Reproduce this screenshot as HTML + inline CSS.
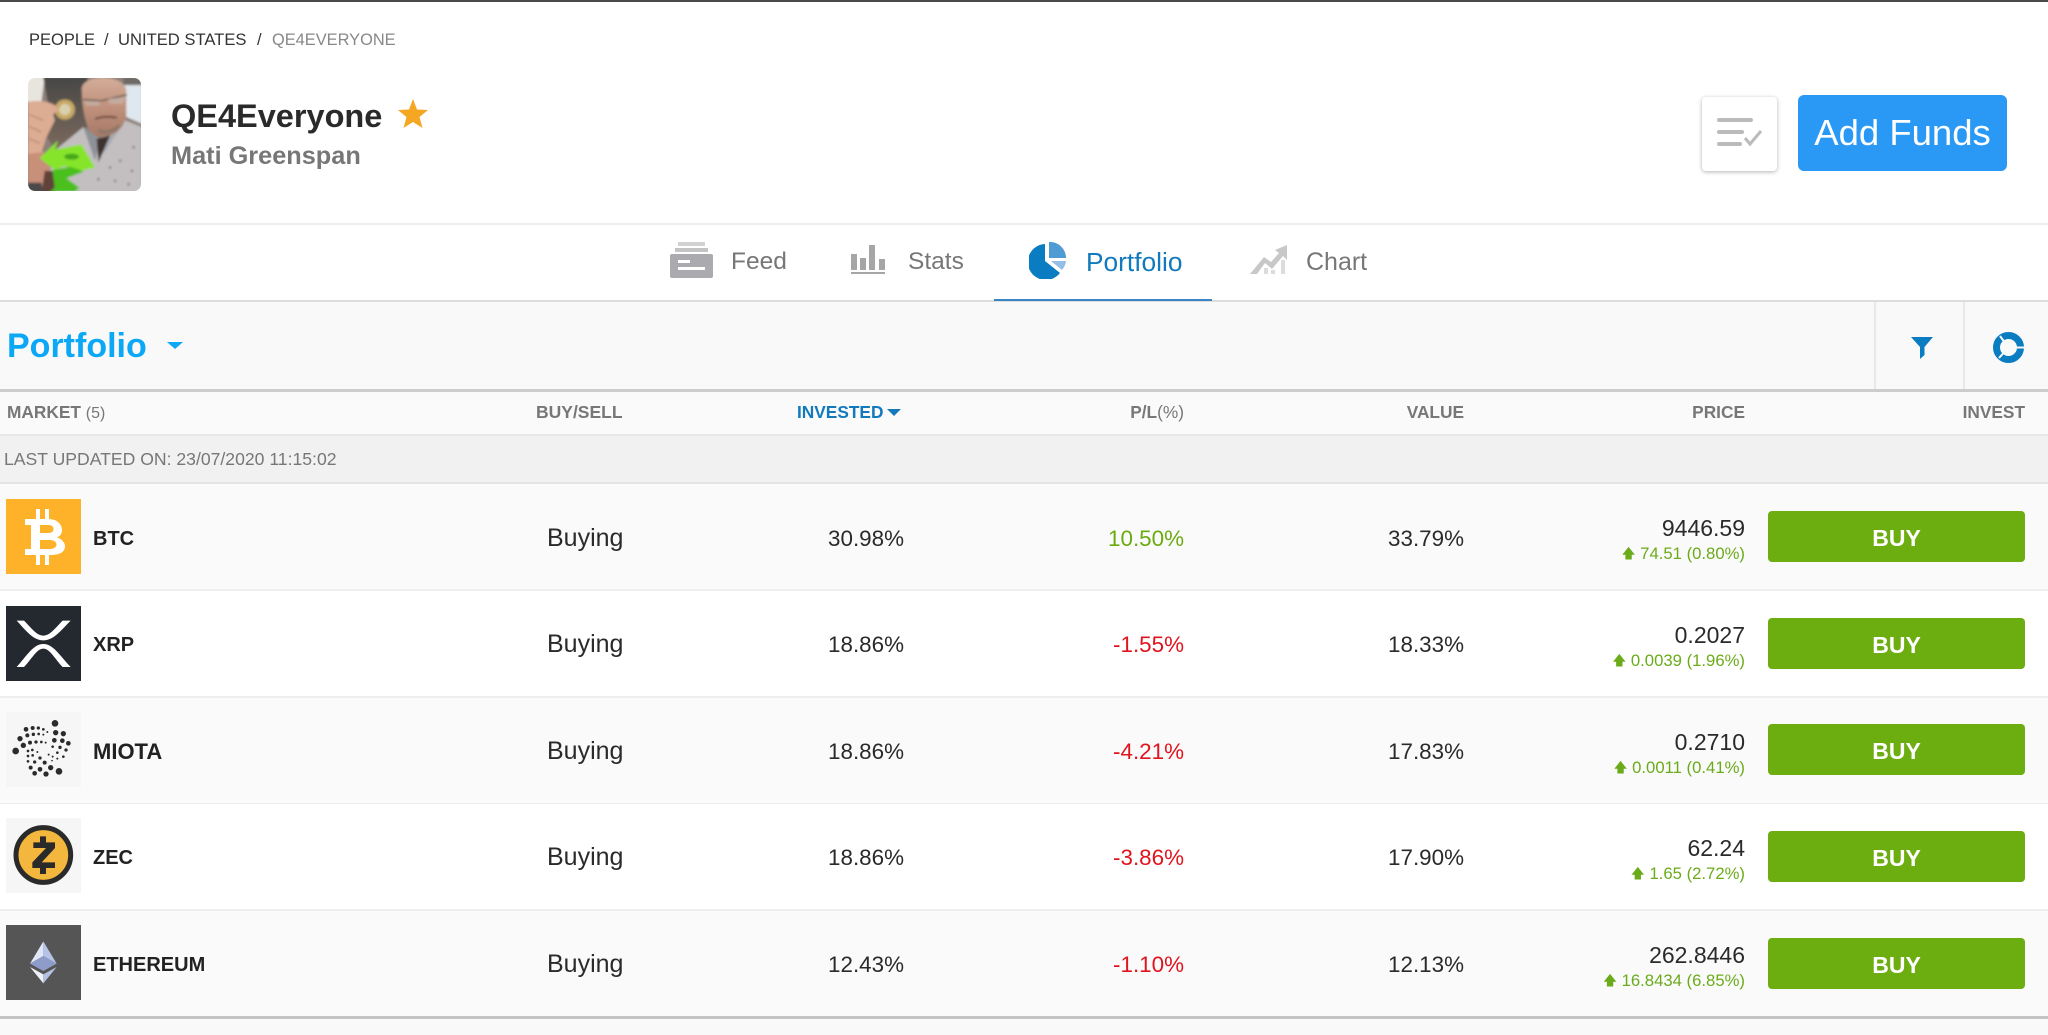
<!DOCTYPE html>
<html><head><meta charset="utf-8"><title>QE4Everyone</title>
<style>
*{box-sizing:border-box;margin:0;padding:0}
html,body{width:2048px;height:1035px;overflow:hidden;background:#fff;font-family:"Liberation Sans",sans-serif;color:#222}
.a{position:absolute}
.t{position:absolute;white-space:nowrap;line-height:30px;height:30px}
.r{text-align:right}
.row{position:absolute;left:0;width:2048px;height:107px;border-bottom:2px solid #eeeeee}
.odd{background:#fafafa}
.ev{background:#fff}
.ic{position:absolute;left:6px;width:75px;height:75px;display:block}
.nm{font-weight:700;font-size:20px;left:93px}
.by{font-size:25px;left:547px;color:#2a2a2a}
.n{font-size:22.4px;color:#2a2a2a}
.p{font-size:23px;color:#2a2a2a;right:303px;text-align:right}
.c{font-size:16.7px;color:#6bab1a;right:303px;text-align:right}
.c span{font-size:13.500px;position:relative;top:-1px}
.g{color:#6bab10}.d{color:#e0141e}
.buy{position:absolute;left:1768px;width:257px;height:51px;background:#6cad10;border-radius:4px;color:#fff;font-weight:700;font-size:23px;line-height:53px;text-align:center}
.h{font-weight:700;font-size:17.300px;color:#777}
.tab{font-size:25px;color:#777}
</style></head><body>
<div class="a" style="left:0;top:0;width:2048px;height:2px;background:#4a4a4a"></div>

<div class="t" style="left:29px;top:25px;font-size:16.500px;color:#333">PEOPLE</div>
<div class="t" style="left:104px;top:25px;font-size:16.500px;color:#333">/</div>
<div class="t" style="left:118px;top:25px;font-size:16.600px;color:#333">UNITED STATES</div>
<div class="t" style="left:257px;top:25px;font-size:16.500px;color:#333">/</div>
<div class="t" style="left:272px;top:25px;font-size:16.400px;color:#888">QE4EVERYONE</div>

<svg class="a" style="left:28px;top:78px;border-radius:7px" width="113" height="113" viewBox="85 24 337 336" preserveAspectRatio="none">
<defs>
<filter id="bl" x="-5%" y="-5%" width="110%" height="110%"><feGaussianBlur stdDeviation="3.500"/></filter>
<linearGradient id="wall" x1="0" y1="0" x2="0" y2="1"><stop offset="0" stop-color="#474745"/><stop offset="1" stop-color="#7b6a5e"/></linearGradient>
<linearGradient id="skin" x1="0" y1="0" x2="0" y2="1"><stop offset="0" stop-color="#d3ad99"/><stop offset=".5" stop-color="#c0917c"/><stop offset="1" stop-color="#a57a66"/></linearGradient>
</defs>
<g filter="url(#bl)">
<rect x="80" y="20" width="350" height="350" fill="#8d7f78"/>
<path d="M80 20H135L125 95H80Z" fill="#e8e5df"/>
<path d="M130 20H262V170L165 235L135 190L150 130Z" fill="url(#wall)"/>
<path d="M370 20H425V45H370Z" fill="#6f6b66"/>
<path d="M372 45H425V160L378 140Z" fill="#dfe8ef"/>
<circle cx="195" cy="118" r="30" fill="#c7a865"/><circle cx="195" cy="118" r="17" fill="#d9d1ad"/>
<path d="M135 365L165 240L250 170L300 205L375 150L425 170V365Z" fill="#c3bfc0"/>
<path d="M250 170L285 270L300 205Z" fill="#8d9298"/>
<path d="M375 150L300 205L310 250Z" fill="#a7acb2"/>
<path d="M290 205L330 195L295 275Z" fill="#3c332f"/>
<g fill="#8a7d7c"><circle cx="330" cy="290" r="4"/><circle cx="360" cy="270" r="4"/><circle cx="395" cy="300" r="4"/><circle cx="345" cy="330" r="4"/><circle cx="295" cy="325" r="4"/><circle cx="385" cy="340" r="4"/><circle cx="400" cy="230" r="4"/></g>
<path d="M85 250L130 240L150 290L155 340L130 365H85Z" fill="#c88f79"/>
<path d="M135 300L165 300L170 365H125Z" fill="#5f4238"/>
<path d="M85 335H125L130 365H85Z" fill="#4c4a48"/>
<path d="M85 95C120 88 165 95 177 118L160 132L165 150L140 200L125 245L85 250Z" fill="#dcac93"/>
<path d="M88 132L130 150M88 168L125 185M88 205L120 218" stroke="#b47f69" stroke-width="3" fill="none"/>
<path d="M245 55C250 12 370 12 378 60V135C370 190 315 205 288 197C262 185 252 140 247 95Z" fill="url(#skin)"/>
<path d="M250 88L302 92L380 74" stroke="#4f4a48" stroke-width="4" fill="none"/>
<path d="M254 92L258 106H296L302 94ZM324 86L328 101H366L376 80Z" fill="#c4ab9e"/>
<path d="M285 146C305 138 330 138 350 142" stroke="#6e4438" stroke-width="6" fill="none"/>
<path d="M295 180C315 190 340 182 358 165" stroke="#8e776a" stroke-width="10" fill="none"/>
<path d="M120 262L175 210L165 237L225 225L245 222L285 290L230 303L195 286L165 298Z" fill="#86e52a"/>
<path d="M158 298L212 288L252 302L200 322L238 350L225 362H150L165 350Z" fill="#4cc01e"/>
<ellipse cx="215" cy="258" rx="22" ry="9" fill="#46a71e"/>
</g></svg>

<div class="t" style="left:171px;top:96px;height:40px;line-height:40px;font-size:32.500px;font-weight:700;color:#2a2a2a">QE4Everyone</div>
<svg class="a" style="left:398px;top:99px" width="30" height="29" viewBox="0 0 30 29"><path d="M15 0L19 10.500L30 11L21.500 18L24.500 29L15 23L5.500 29L8.500 18L0 11L11 10.500Z" fill="#f5a623"/></svg>
<div class="t" style="left:171px;top:141px;font-size:25.300px;font-weight:700;color:#777">Mati Greenspan</div>

<div class="a" style="left:1702px;top:97px;width:75px;height:74px;background:#fff;border-radius:4px;box-shadow:0 1px 4px rgba(0,0,0,.3)"></div>
<svg class="a" style="left:1717px;top:117px" width="46" height="34" viewBox="0 0 46 34"><path d="M2 3H34M2 15H25M2 27H23" stroke="#bbb" stroke-width="4" stroke-linecap="round" fill="none"/><path d="M28 21L33 27L44 14" stroke="#bbb" stroke-width="3" fill="none"/></svg>
<div class="a" style="left:1798px;top:95px;width:209px;height:76px;background:#2a99f6;border-radius:6px;color:#fff;font-size:36.500px;line-height:76px;text-align:center">Add Funds</div>

<div class="a" style="left:0;top:223px;width:2048px;height:2px;background:#eeeeee"></div>

<svg class="a" style="left:670px;top:241px" width="43" height="37" viewBox="0 0 43 37"><rect x="8" y="1" width="27" height="4" fill="#d2d2d2"/><rect x="5" y="7" width="33" height="4" fill="#c4c4c4"/><rect x="0" y="13" width="43" height="24" rx="2" fill="#aaaaaf"/><rect x="8" y="19" width="12" height="3" fill="#fff"/><rect x="8" y="26" width="27" height="3" fill="#fff"/></svg>
<div class="t tab" style="left:731px;top:247px;font-size:24.500px">Feed</div>
<svg class="a" style="left:851px;top:245px" width="34" height="29" viewBox="0 0 34 29"><g fill="#a6a6a6"><rect x="0" y="9" width="6" height="16"/><rect x="9" y="13" width="6" height="12"/><rect x="18" y="0" width="6" height="25"/><rect x="28" y="14" width="6" height="11"/><rect x="0" y="27" width="34" height="2"/></g></svg>
<div class="t tab" style="left:908px;top:247px;font-size:24.500px">Stats</div>
<svg class="a" style="left:1029px;top:242px" width="38" height="37" viewBox="0 0 38 37"><path d="M16 2A18 18 0 1 0 31 31L16 19Z" fill="#0a7cc1"/><path d="M20 0A16 16 0 0 1 37 16H20Z" fill="#4f9bd3"/><path d="M22 19H37A17 17 0 0 1 33 28Z" fill="#93bee6"/></svg>
<div class="t tab" style="left:1086px;top:247px;color:#1279bd;font-size:26.300px">Portfolio</div>
<svg class="a" style="left:1250px;top:245px" width="37" height="29" viewBox="0 0 37 29"><path d="M0 29L14 12L21 17L29 8L25 5L37 0V15L33 11L22 24L15 18L7 29Z" fill="#c8c8c8"/><rect x="14" y="23" width="4" height="6" fill="#dcdcdc"/><rect x="21" y="25" width="4" height="4" fill="#dcdcdc"/><rect x="31" y="15" width="4" height="14" fill="#dcdcdc"/></svg>
<div class="t tab" style="left:1306px;top:247px">Chart</div>

<div class="a" style="left:0;top:300px;width:2048px;height:2px;background:#dddddd"></div>
<div class="a" style="left:994px;top:299px;width:218px;height:2px;background:#3a86c4"></div>

<div class="a" style="left:0;top:302px;width:2048px;height:87px;background:#f9f9f9"></div>
<div class="t" style="left:7px;top:326px;height:40px;line-height:40px;font-size:34px;font-weight:700;color:#0ba8f6">Portfolio</div>
<div class="a" style="left:167px;top:342px;width:0;height:0;border-left:8px solid transparent;border-right:8px solid transparent;border-top:7px solid #0ba8f6"></div>
<div class="a" style="left:1874px;top:302px;width:2px;height:87px;background:#e8e8e8"></div>
<div class="a" style="left:1963px;top:302px;width:2px;height:87px;background:#e8e8e8"></div>
<svg class="a" style="left:1911px;top:337px" width="22" height="22" viewBox="0 0 22 22"><path d="M0 0H22L13.500 10V18L9 22V10Z" fill="#0a7cc1"/></svg>
<svg class="a" style="left:1992px;top:331px" width="33" height="33" viewBox="0 0 33 33"><circle cx="16.500" cy="16.500" r="12" fill="none" stroke="#0a7cc1" stroke-width="7"/><path d="M24 16.500H33M8 5L12 10.500M7 27L11.500 22" stroke="#f9f9f9" stroke-width="2"/></svg>

<div class="a" style="left:0;top:389px;width:2048px;height:3px;background:#cdcdcd"></div>
<div class="a" style="left:0;top:392px;width:2048px;height:42px;background:#fafafa"></div>
<div class="a" style="left:0;top:434px;width:2048px;height:2px;background:#e8e8e8"></div>
<div class="t h" style="left:7px;top:397px">MARKET <span style="font-weight:400;font-size:16px">(5)</span></div>
<div class="t h" style="left:536px;top:397px;font-size:17.500px">BUY/SELL</div>
<div class="t h" style="left:797px;top:397px;color:#1279bd">INVESTED</div>
<div class="a" style="left:887px;top:409px;width:0;height:0;border-left:7px solid transparent;border-right:7px solid transparent;border-top:7px solid #1279bd"></div>
<div class="t h r" style="right:864px;top:397px">P/L<span style="font-weight:400">(%)</span></div>
<div class="t h r" style="right:584px;top:397px">VALUE</div>
<div class="t h r" style="right:303px;top:397px">PRICE</div>
<div class="t h r" style="right:23px;top:397px">INVEST</div>

<div class="a" style="left:0;top:436px;width:2048px;height:48px;background:#f1f1f1;border-bottom:2px solid #e4e4e4"></div>
<div class="t" style="left:4px;top:444px;font-size:17.600px;color:#777">LAST UPDATED ON: 23/07/2020 11:15:02</div>

<!-- BTC -->
<div class="row odd" style="top:484px;height:107px"></div>
<svg class="ic" style="top:499px" viewBox="0 0 75 75"><rect width="75" height="75" fill="#fdb22a"/><path fill="#fff" fill-rule="evenodd" d="M19 20H42C52 20 56 26 56 31C56 35 54 37 51 38.500C56 40 59 44 59 47C59 53 54 56 44 56H19V50H25V26H19ZM34 26V34H42C46 34 47.500 32.500 47.500 30C47.500 27.500 46 26 42 26ZM34 41V50H44C48 50 50.500 48 50.500 45.500C50.500 43 48 41 44 41Z"/><path fill="#fff" d="M30 10h4v10h-4zM39 10h4v10h-4zM30 56h4v10h-4zM39 56h4v10h-4z"/></svg>
<div class="t nm" style="top:524px">BTC</div>
<div class="t by" style="top:523px">Buying</div>
<div class="t n r" style="right:1144px;top:524px">30.98%</div>
<div class="t n r g" style="right:864px;top:524px">10.50%</div>
<div class="t n r" style="right:584px;top:524px">33.79%</div>
<div class="t p" style="top:513px">9446.59</div>
<div class="t c" style="top:539px"><span>&#129093;</span> 74.51 (0.80%)</div>
<div class="buy" style="top:511px;line-height:54px">BUY</div>

<!-- XRP -->
<div class="row ev" style="top:591px"></div>
<svg class="ic" style="top:606px" viewBox="18 48 225 225"><rect x="18" y="48" width="225" height="225" fill="#23292f"/><path fill="#fff" d="M50 92H72C95 115 110 137 130 137C150 137 165 115 188 92H212C180 125 160 151 130 151C100 151 80 125 50 92Z"/><path fill="#fff" d="M50 231H72C95 208 110 176 130 176C150 176 165 208 188 231H212C180 198 160 162 130 162C100 162 80 198 50 231Z"/></svg>
<div class="t nm" style="top:630px">XRP</div>
<div class="t by" style="top:629px">Buying</div>
<div class="t n r" style="right:1144px;top:630px">18.86%</div>
<div class="t n r d" style="right:864px;top:630px">-1.55%</div>
<div class="t n r" style="right:584px;top:630px">18.33%</div>
<div class="t p" style="top:620px">0.2027</div>
<div class="t c" style="top:646px"><span>&#129093;</span> 0.0039 (1.96%)</div>
<div class="buy" style="top:618px;line-height:54px">BUY</div>

<!-- MIOTA -->
<div class="row odd" style="top:698px"></div>
<svg class="ic" style="top:712px" viewBox="18 38 225 225"><rect x="18" y="38" width="225" height="225" fill="#f6f6f6"/><g fill="#2b2b2b"><circle cx="165" cy="72" r="10"/><circle cx="47" cy="155" r="10"/><circle cx="177" cy="216" r="10"/><circle cx="167" cy="100" r="8"/><circle cx="190" cy="103" r="8"/><circle cx="60" cy="118" r="8"/><circle cx="70" cy="138" r="8"/><circle cx="205" cy="132" r="7"/><circle cx="187" cy="124" r="7"/><circle cx="163" cy="123" r="7"/><circle cx="138" cy="224" r="8"/><circle cx="152" cy="205" r="8"/><circle cx="120" cy="210" r="7"/><circle cx="104" cy="222" r="7"/><circle cx="92" cy="205" r="6"/><circle cx="78" cy="90" r="7"/><circle cx="98" cy="86" r="6"/><circle cx="115" cy="86" r="5"/><circle cx="130" cy="90" r="4"/><circle cx="142" cy="98" r="3"/><circle cx="82" cy="108" r="6"/><circle cx="100" cy="105" r="5"/><circle cx="116" cy="104" r="4"/><circle cx="130" cy="106" r="3"/><circle cx="90" cy="130" r="6"/><circle cx="108" cy="128" r="5"/><circle cx="124" cy="128" r="4"/><circle cx="137" cy="130" r="3"/><circle cx="84" cy="155" r="4"/><circle cx="97" cy="152" r="4"/><circle cx="112" cy="158" r="3"/><circle cx="84" cy="170" r="4"/><circle cx="98" cy="168" r="4"/><circle cx="120" cy="176" r="5"/><circle cx="84" cy="186" r="4"/><circle cx="104" cy="188" r="5"/><circle cx="134" cy="190" r="6"/><circle cx="180" cy="144" r="5"/><circle cx="198" cy="152" r="5"/><circle cx="158" cy="142" r="4"/><circle cx="172" cy="160" r="4"/><circle cx="190" cy="172" r="4"/><circle cx="146" cy="166" r="3"/><circle cx="158" cy="172" r="3"/><circle cx="172" cy="178" r="3"/><circle cx="156" cy="184" r="2.500"/></g></svg>
<div class="t nm" style="top:737px;font-size:22px">MIOTA</div>
<div class="t by" style="top:736px">Buying</div>
<div class="t n r" style="right:1144px;top:737px">18.86%</div>
<div class="t n r d" style="right:864px;top:737px">-4.21%</div>
<div class="t n r" style="right:584px;top:737px">17.83%</div>
<div class="t p" style="top:727px">0.2710</div>
<div class="t c" style="top:753px"><span>&#129093;</span> 0.0011 (0.41%)</div>
<div class="buy" style="top:724px;line-height:54px">BUY</div>

<!-- ZEC -->
<div class="row ev" style="top:804px"></div>
<svg class="ic" style="top:818px" viewBox="18 357 225 225"><rect x="18" y="357" width="225" height="225" fill="#f6f6f6"/><circle cx="130" cy="468" r="82" fill="#f4b73e" stroke="#2a2a2a" stroke-width="15"/><path fill="#2a2a2a" d="M120 412H138V430H165V447L125 490H165V507H138V525H120V507H97V490L138 447H100V430H120Z"/></svg>
<div class="t nm" style="top:843px">ZEC</div>
<div class="t by" style="top:842px">Buying</div>
<div class="t n r" style="right:1144px;top:843px">18.86%</div>
<div class="t n r d" style="right:864px;top:843px">-3.86%</div>
<div class="t n r" style="right:584px;top:843px">17.90%</div>
<div class="t p" style="top:833px">62.24</div>
<div class="t c" style="top:859px"><span>&#129093;</span> 1.65 (2.72%)</div>
<div class="buy" style="top:831px;line-height:54px">BUY</div>

<!-- ETH -->
<div class="row odd" style="top:911px;height:106px;border-bottom:none"></div>
<svg class="ic" style="top:925px" viewBox="18 677 225 225"><rect x="18" y="677" width="225" height="225" fill="#555"/><path d="M130 726L90 793L130 770Z" fill="#dfe6f5"/><path d="M130 726L170 793L130 770Z" fill="#b7c3e6"/><path d="M90 793L130 770L170 793L130 815Z" fill="#8d9cc9"/><path d="M90 803L130 852V825Z" fill="#eef1f8"/><path d="M170 803L130 852V825Z" fill="#b5c1e2"/></svg>
<div class="t nm" style="top:950px">ETHEREUM</div>
<div class="t by" style="top:949px">Buying</div>
<div class="t n r" style="right:1144px;top:950px">12.43%</div>
<div class="t n r d" style="right:864px;top:950px">-1.10%</div>
<div class="t n r" style="right:584px;top:950px">12.13%</div>
<div class="t p" style="top:940px">262.8446</div>
<div class="t c" style="top:966px"><span>&#129093;</span> 16.8434 (6.85%)</div>
<div class="buy" style="top:938px;line-height:54px">BUY</div>

<div class="a" style="left:0;top:1016px;width:2048px;height:3px;background:#c4c4c4"></div>
<div class="a" style="left:0;top:1019px;width:2048px;height:16px;background:#f9f9f9"></div>
</body></html>
